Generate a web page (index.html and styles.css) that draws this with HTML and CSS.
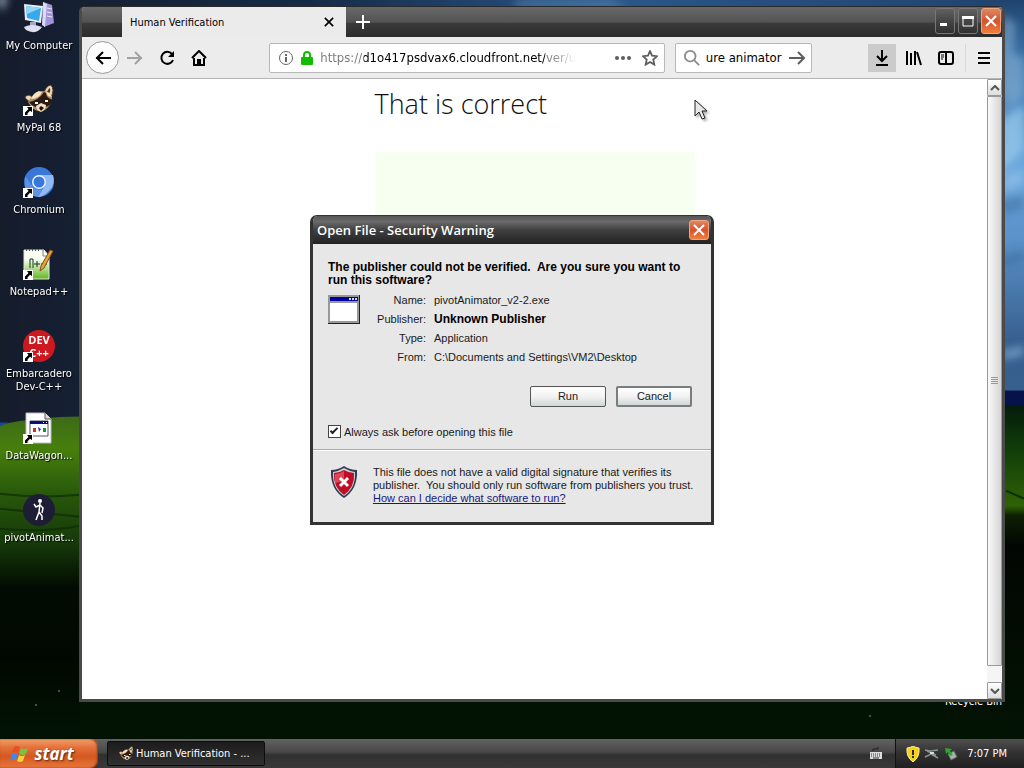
FILE: index.html
```html
<!DOCTYPE html>
<html lang="en">
<head>
  <meta charset="UTF-8" />
  <meta name="viewport" content="width=device-width, initial-scale=1.0"/>
  <title>Human Verification</title>
  <link rel="stylesheet" href="styles.css">
</head>
<body>
  <svg width="0" height="0" class="sprites" aria-hidden="true">
    <symbol id="shortcut" viewBox="0 0 10 10">
      <path d="M0 0h10v10H0z" fill="#fff"/>
      <path d="M4 1h5v5L7 4.800 4.500 7.500V9H2V6.500L5.500 3z" fill="#000"/>
    </symbol>
    <symbol id="raccoon" viewBox="0 0 32 32">
      <path d="M21 8Q24 1 28 1q4 5 0 12z" fill="#ecd6b4" stroke="#4a3322"/>
      <path d="M24 8q2-4 3-4 1 3-1 6z" fill="#4a3322"/>
      <path d="M2 14q0-3 4-3l6 3-3 6z" fill="#ecd6b4" stroke="#4a3322"/>
      <path d="M5 18q4-8 14-11 10 0 10 8-1 8-9 12-9 2-15-9z" fill="#b48e62"/>
      <path d="M6 18q10-2 15-10l2 1q0 5 7 7-2 6-8 7-10 3-16-5z" fill="#2c1b14"/>
      <path d="M8 15q8 0 11-7l-3-1q-6 2-8 8zm15-7q4 0 6 5l-4-1z" fill="#f4e3c4"/>
      <path d="M13 22l5-3 5 2q0 5-5 7-5-2-5-6z" fill="#f1dfbf"/>
      <path d="M16 24l2-2 3 2-3 3z" fill="#1c1310"/>
      <path d="M12 18h3v2h-3zm10-2h3v2h-3z" fill="#fff"/>
    </symbol>
    <symbol id="cross" viewBox="0 0 12 12">
      <path d="M1 1l10 10M11 1L1 11" fill="none" stroke="currentColor" stroke-width="2"/>
    </symbol>
  </svg>

  <main class="desktop">
    <svg class="wallpaper" viewBox="0 0 1024 738" preserveAspectRatio="none" aria-hidden="true">
      <defs>
        <linearGradient id="sky" x1="0" x2="1" y1="0" y2="0">
          <stop offset="0" stop-color="#151c2c"/>
          <stop offset=".3" stop-color="#162b47"/>
          <stop offset=".6" stop-color="#2a568a"/>
          <stop offset="1" stop-color="#20436e"/>
        </linearGradient>
        <linearGradient id="rightSky" x1="0" x2="0" y1="0" y2="1">
          <stop offset="0" stop-color="#20436e"/>
          <stop offset=".15" stop-color="#3f78ad"/>
          <stop offset=".4" stop-color="#69a7dc"/>
          <stop offset=".6" stop-color="#5a91c8"/>
          <stop offset=".85" stop-color="#385f90"/>
          <stop offset="1" stop-color="#36608c"/>
        </linearGradient>
        <linearGradient id="leftHill" x1="0" x2="0" y1="0" y2="1">
          <stop offset="0" stop-color="#3d6a18"/>
          <stop offset=".1" stop-color="#477f0c"/>
          <stop offset=".24" stop-color="#28580b"/>
          <stop offset=".4" stop-color="#15370a"/>
          <stop offset=".53" stop-color="#020c02"/>
          <stop offset=".75" stop-color="#010801"/>
          <stop offset="1" stop-color="#021303"/>
        </linearGradient>
        <linearGradient id="rightHill" x1="0" x2="0" y1="0" y2="1">
          <stop offset="0" stop-color="#041b0d"/>
          <stop offset=".12" stop-color="#0f3b09"/>
          <stop offset=".3" stop-color="#2f6205"/>
          <stop offset=".33" stop-color="#0d2004"/>
          <stop offset=".42" stop-color="#020602"/>
          <stop offset="1" stop-color="#021303"/>
        </linearGradient>
        <filter id="soft"><feGaussianBlur stdDeviation="4"/></filter>
      </defs>
      <rect width="1024" height="738" fill="url(#sky)"/>
      <rect x="990" width="34" height="400" fill="url(#rightSky)"/>
      <g filter="url(#soft)">
        <path d="M1003 15l12 8-2 30 11 6v35l-14 14-10-20z" fill="#86acd0" opacity=".6"/>
        <path d="M1000 120l24-15v45l-24 22z" fill="#9acbed" opacity=".7"/>
        <path d="M1002 175l22-8v18l-22 8zM1002 350l22-5v10l-22 4z" fill="#a2cdf0" opacity=".5"/>
        <path d="M1002 200l22-4v12l-22 6zM1002 256l22-6v10l-22 6z" fill="#315c8b" opacity=".4"/>
        <path d="M520 0h90l20 8H510z" fill="#5d92bd" opacity=".6"/>
        <path d="M-4-4h12L2 12z" fill="#99adc2"/>
      </g>
      <path d="M0 424q40-8 80-8v322H0z" fill="url(#leftHill)"/>
      <path d="M0 422h8l-8 4z" fill="#1646a0"/>
      <path d="M0 493q40 5 80 1M0 528q45 4 80-3M0 508l80 8" fill="none" stroke="#0d2b04" stroke-width="2" opacity=".7"/>
      <path d="M80 600h860v138H80z" fill="#021303"/>
      <path d="M940 390h84v16h-84z" fill="#06124a"/>
      <path d="M940 405h84v333h-84z" fill="url(#rightHill)"/>
      <path d="M1006 490l18 8" stroke="#0d2b04" stroke-width="2"/>
      <path d="M58 689h2v2h-2zM35 703h2v2h-2zM869 714h2v2h-2z" fill="#3d553d"/>
    </svg>

    <ul class="shortcuts">
      <li>
        <svg viewBox="0 0 32 32">
          <path d="M20 0l9 3 2 18-10 4z" fill="#9f95d8"/>
          <path d="M20 0l4 2-2 23-3-2z" fill="#dcd8f8"/>
          <path d="M24 6l5 1M24 10l5 1M24 14l5 1" stroke="#edeafd"/>
          <path d="M1 2l19 2-2 17L2 18z" fill="#e9edf6"/>
          <path d="M3 4l15 2-2 13L4 16z" fill="#38a9eb"/>
          <path d="M3 4l15 2L4 12z" fill="#8ed6f8"/>
          <path d="M7 20h6v4H7z" fill="#a5a8c8"/>
          <path d="M1 25q8-4 18 0-4 6-10 5Q2 29 1 25z" fill="#dcdff0"/>
        </svg>
        <span>My Computer</span>
      </li>
      <li>
        <svg viewBox="0 0 32 32"><use href="#raccoon" width="32" height="32"/><use href="#shortcut" y="22" width="10" height="10"/></svg>
        <span>MyPal 68</span>
      </li>
      <li>
        <svg viewBox="0 0 32 32">
          <circle cx="16" cy="16" r="15" fill="#3a78d8"/>
          <path d="M16 9h14q3 10-5 17-5 5-10 5l7-12z" fill="#91b9f3"/>
          <path d="M2 10l8 11q3 4 9 2l-4 8Q5 30 2 22z" fill="#5d92e5"/>
          <circle cx="16" cy="16" r="7" fill="#e8f1ff"/>
          <circle cx="16" cy="16" r="5.500" fill="#3977dc"/>
          <use href="#shortcut" y="22" width="10" height="10"/>
        </svg>
        <span>Chromium</span>
      </li>
      <li>
        <svg viewBox="0 0 32 32">
          <defs><linearGradient id="note" x1="0" x2="0" y1="0" y2="1"><stop offset=".3" stop-color="#fbfff4"/><stop offset="1" stop-color="#61b91f"/></linearGradient></defs>
          <path d="M1 2h20l5 6v23H1z" fill="url(#note)" stroke="#dfe8d6"/>
          <path d="M20 2v6h6" fill="#fff" stroke="#7c8572"/>
          <path d="M3 2h15" stroke="#525b4d" stroke-width="2" stroke-dasharray="1 2"/>
          <path d="M7 20v-9h3v9M11 16h6M14 13v6M18 16h6M21 13v6" fill="none" stroke="#19331b"/>
          <path d="M17 23l1-5L27 2l3 1-9 17z" fill="#e8a034" stroke="#815020"/>
          <use href="#shortcut" y="22" width="10" height="10"/>
        </svg>
        <span>Notepad++</span>
      </li>
      <li>
        <svg viewBox="0 0 32 32">
          <circle cx="16" cy="16" r="16" fill="#cc181e"/>
          <g class="dev-logo"><text x="16" y="14">DEV</text><text x="16" y="27">C++</text></g>
          <use href="#shortcut" y="22" width="10" height="10"/>
        </svg>
        <span>Embarcadero Dev-C++</span>
      </li>
      <li>
        <svg viewBox="0 0 32 32">
          <path d="M3 1h19l6 6v24H3z" fill="#fff" stroke="#bcbcc3"/>
          <path d="M22 1v6h6" fill="#ddd" stroke="#555"/>
          <path d="M7 9h18v15H7z" fill="#fff" stroke="#556"/>
          <path d="M7 9h18v3H7z" fill="#050f80"/>
          <path d="M20 10h1v1h-1zm3 0h1v1h-1z" fill="#fff"/>
          <path d="M10 16h3v4h-3z" fill="#c3312a"/><path d="M15 15l3 2-2 3z" fill="#193da5"/><path d="M20 16h3v4h-3z" fill="#238653"/>
          <use href="#shortcut" y="22" width="10" height="10"/>
        </svg>
        <span>DataWagon...</span>
      </li>
      <li>
        <svg viewBox="0 0 32 32">
          <circle cx="16" cy="16" r="16" fill="#1d1e36"/>
          <circle cx="17" cy="7" r="2" fill="#fff"/>
          <path d="M17 9l-1 9-3 8M16 18l3 4v4M17 11l-4 2-2-3M17 11l3 3-1 5" fill="none" stroke="#fff" stroke-width="1.500"/>
        </svg>
        <span>pivotAnimat...</span>
      </li>
    </ul>
    <span class="recycle-label">Recycle Bin</span>

    <section class="browser">
      <header class="titlebar">
        <div class="tab">
          <span>Human Verification</span>
          <button class="tab-close" aria-label="Close tab"><svg width="10" height="10"><use href="#cross"/></svg></button>
        </div>
        <button class="new-tab" aria-label="New tab">
          <svg width="14" height="14" viewBox="0 0 14 14"><path d="M7 0v14M0 7h14" stroke="#fff" stroke-width="2"/></svg>
        </button>
        <div class="window-buttons">
          <button aria-label="Minimize"><svg width="12" height="12"><path d="M1 8h7v3H1z" fill="#fff"/></svg></button>
          <button aria-label="Maximize"><svg width="12" height="12"><path d="M1 2h10v9H1z" fill="none" stroke="#fff"/><path d="M0 1h12v3H0z" fill="#fff"/></svg></button>
          <button class="close" aria-label="Close"><svg width="12" height="12"><use href="#cross"/></svg></button>
        </div>
      </header>

      <nav class="toolbar">
        <button class="tool back" aria-label="Back">
          <svg viewBox="0 0 16 16"><path d="M16 8H1M8 2L2 8l6 6" fill="none" stroke="#000" stroke-width="2"/></svg>
        </button>
        <button class="tool" aria-label="Forward">
          <svg viewBox="0 0 16 16"><path d="M0 8h15M8 2l6 6-6 6" fill="none" stroke="#a2a2a2" stroke-width="2"/></svg>
        </button>
        <button class="tool" aria-label="Reload">
          <svg viewBox="0 0 16 16"><path d="M13 4a6 6 0 1 0 1 6" fill="none" stroke="#000" stroke-width="2"/><path d="M15 1v6H9z"/></svg>
        </button>
        <button class="tool" aria-label="Home">
          <svg viewBox="0 0 16 16"><path d="M1 8l7-7 7 7M3 8v7h10V8" fill="none" stroke="#000" stroke-width="2"/><path d="M6 9h4v6H6z"/></svg>
        </button>
        <div class="spacer"></div>
        <div class="field url">
          <svg width="16" height="16" viewBox="0 0 16 16"><circle cx="8" cy="8" r="6.500" fill="none" stroke="#666"/><path d="M7 4h2v2H7zM7 7h2v5H7z" fill="#666"/></svg>
          <svg width="14" height="16" viewBox="0 0 14 16"><path d="M4 7V5a3 3 0 0 1 6 0v2" fill="none" stroke="#12bc00" stroke-width="2"/><rect x="1" y="7" width="12" height="8" rx="1" fill="#12bc00"/></svg>
          <input type="text" aria-label="Address" value="https://d1o417psdvax6.cloudfront.net/ver/us">
          <button class="in-field" aria-label="Page actions"><svg width="18" height="16" viewBox="0 0 18 16" fill="#5e5e5e"><circle cx="3" cy="8" r="2"/><circle cx="9" cy="8" r="2"/><circle cx="15" cy="8" r="2"/></svg></button>
          <button class="in-field" aria-label="Bookmark"><svg width="16" height="16" viewBox="0 0 16 16"><path d="M8 1l2 4.700 5 .5-3.700 3.400 1 5L8 12l-4.300 2.600 1-5L1 6.200l5-.5z" fill="none" stroke="#5e5e5e" stroke-width="1.800"/></svg></button>
        </div>
        <div class="field search">
          <svg width="16" height="16" viewBox="0 0 18 18"><circle cx="7" cy="7" r="6" fill="none" stroke="#8b8b8b" stroke-width="2"/><path d="M11 11l6 6" stroke="#8b8b8b" stroke-width="2"/></svg>
          <input type="text" aria-label="Search" value="ure animator">
          <button class="in-field" aria-label="Go"><svg width="16" height="16" viewBox="0 0 16 16"><path d="M0 8h15M9 2l6 6-6 6" fill="none" stroke="#5e5e5e" stroke-width="2"/></svg></button>
        </div>
        <div class="spacer"></div>
        <button class="tool active" aria-label="Downloads">
          <svg viewBox="0 0 16 16"><path d="M8 0v11M3 6l5 5 5-5M2 15h12" fill="none" stroke="#000" stroke-width="2"/></svg>
        </button>
        <button class="tool" aria-label="Library">
          <svg viewBox="0 0 16 16"><path d="M1 1v14M5 3v12M9 1v14M11 2l4 13" fill="none" stroke="#000" stroke-width="2"/></svg>
        </button>
        <button class="tool" aria-label="Sidebar">
          <svg viewBox="0 0 16 16"><rect x="1" y="2" width="14" height="12" rx="2" fill="none" stroke="#000" stroke-width="2"/><path d="M8 2v12" stroke="#000" stroke-width="2"/><path d="M3 5h3M3 7h3M3 9h2" stroke="#000"/></svg>
        </button>
        <button class="tool menu" aria-label="Menu">
          <svg viewBox="0 0 16 16"><path d="M2 3h12M2 8h12M2 13h12" stroke="#000" stroke-width="2"/></svg>
        </button>
      </nav>

      <div class="viewport">
        <article class="page">
          <h1>That is correct</h1>
          <div class="result"></div>
        </article>
        <div class="scrollbar">
          <button aria-label="Scroll up"><svg width="10" height="6"><path d="M1 5l4-4 4 4" fill="none" stroke="#555" stroke-width="2"/></svg></button>
          <div class="thumb"><svg width="7" height="8" viewBox="0 0 7 8"><path d="M0 0h7v1H0zM0 2h7v1H0zM0 4h7v1H0zM0 6h7v1H0z" fill="#999"/></svg></div>
          <button aria-label="Scroll down"><svg width="10" height="6"><path d="M1 1l4 4 4-4" fill="none" stroke="#555" stroke-width="2"/></svg></button>
        </div>
      </div>
    </section>

    <div class="dialog-layer">
      <section class="dialog" role="dialog" aria-labelledby="dialogTitle">
        <header class="dialog-title">
          <h2 id="dialogTitle">Open File - Security Warning</h2>
          <button aria-label="Close"><svg width="12" height="12"><use href="#cross"/></svg></button>
        </header>
        <div class="dialog-body">
          <p class="question">The publisher could not be verified.&nbsp; Are you sure you want to run this software?</p>
          <div class="file">
            <svg width="32" height="29" viewBox="0 0 32 29">
              <path d="M0 0h32v29H0z" fill="#222"/><path d="M0 0h31v28H0z" fill="#999"/>
              <path d="M2 2h28v4H2z" fill="#0000a0"/><path d="M2 8h27v18H2z" fill="#fff"/>
              <path d="M21 3h2v2h-2zm3 0h2v2h-2zm3 0h2v2h-2z" fill="#ddd"/>
            </svg>
            <dl>
              <dt>Name:</dt><dd>pivotAnimator_v2-2.exe</dd>
              <dt>Publisher:</dt><dd class="publisher">Unknown Publisher</dd>
              <dt>Type:</dt><dd>Application</dd>
              <dt>From:</dt><dd>C:\Documents and Settings\VM2\Desktop</dd>
            </dl>
          </div>
          <div class="actions">
            <button>Run</button>
            <button class="default">Cancel</button>
          </div>
          <label class="ask"><input type="checkbox" checked> Always ask before opening this file</label>
        </div>
        <footer class="dialog-note">
          <svg width="28" height="32" viewBox="0 0 28 32">
            <path d="M14 0q6 4 13 4 1 19-13 28Q0 23 1 4q7 0 13-4z" fill="#333b50"/>
            <path d="M14 2q5 3 11 4 1 16-11 24Q2 22 3 6q6-1 11-4z" fill="#c9ced9"/>
            <path d="M14 4q5 3 10 3 1 14-10 22Q3 21 4 7q5 0 10-3z" fill="#c00c24"/>
            <path d="M5 8q5 0 9-3v10L5 17z" fill="#dc4757"/>
            <path d="M10 12l8 8M18 12l-8 8" stroke="#fff" stroke-width="3"/>
          </svg>
          <p>This file does not have a valid digital signature that verifies its publisher.&nbsp; You should only run software from publishers you trust.<br><a href="#">How can I decide what software to run?</a></p>
        </footer>
      </section>
    </div>

    <svg class="cursor" width="14" height="22" viewBox="0 0 14 22">
      <path d="M1 1v16l4-4 3 7 3-1-3-7h5z" fill="#e8e8e8" stroke="#222"/>
    </svg>
  </main>

  <footer class="taskbar">
    <button class="start">
      <svg width="20" height="18" viewBox="0 0 20 18">
        <path d="M4 2q3-2 6 0L8 8Q5 6 2 8z" fill="#e85024"/>
        <path d="M11 3q3 2 7 0l-2 6q-3 2-7 0z" fill="#7bc043"/>
        <path d="M2 9q3-2 6 0l-2 6q-3-2-6 0z" fill="#4c83e8"/>
        <path d="M9 10q3 2 6 0l-2 6q-3 2-6 0z" fill="#f7cf36"/>
      </svg>
      start
    </button>
    <button class="task">
      <svg width="16" height="16"><use href="#raccoon"/></svg>
      Human Verification - ...
    </button>
    <svg class="keyboard" width="14" height="13" viewBox="0 0 14 13">
      <path d="M4 4V2h5V0" fill="none" stroke="#222"/>
      <path d="M1 5h12v7H1z" fill="#ddd"/>
      <path d="M2 7h10M2 9h10" stroke="#333" stroke-dasharray="1 1"/><path d="M4 11h6" stroke="#333"/>
    </svg>
    <div class="tray">
      <svg width="14" height="16" viewBox="0 0 14 16"><path d="M7 0q3 2 6 2 1 9-6 14Q0 11 1 2q3 0 6-2z" fill="#f6d21f" stroke="#fff09c"/><path d="M6 4h2v5H6zM6 10h2v2H6z" fill="#322a00"/></svg>
      <svg width="16" height="14" viewBox="0 0 16 14"><path d="M1 3l5 1 8-1M1 10l6-3 7 4M3 4l9 4" fill="none" stroke="#8b948d" stroke-width="1.500"/><path d="M6 5h4v2H6z" fill="#d4ddd7"/></svg>
      <svg width="14" height="16" viewBox="0 0 14 16"><path d="M4 8l6-3 3 6-6 3z" fill="#a9b4ae" stroke="#5e6662"/><path d="M1 2l7 1-2 2 3 4-3 1-2-4-2 2z" fill="#2fa52c"/></svg>
      <time>7:07 PM</time>
    </div>
  </footer>
</body>
</html>
```
FILE: styles.css
```css
*, *::before, *::after {
  box-sizing: border-box;
}

body {
  margin: 0;
  height: 100vh;
  min-height: 560px;
  display: flex;
  flex-direction: column;
  overflow: hidden;
  font-family: "DejaVu Sans Condensed", "DejaVu Sans", sans-serif;
  font-size: 11px;
  color: #000;
}

button, input {
  font: inherit;
  color: inherit;
}

button {
  display: flex;
  align-items: center;
  justify-content: center;
  padding: 0;
  border: none;
  background: none;
}

svg {
  display: block;
  flex-shrink: 0;
}

.sprites {
  position: absolute;
}

.desktop {
  position: relative;
  flex: 1;
  overflow: hidden;
}

.wallpaper {
  position: absolute;
  width: 100%;
  height: 100%;
}

/* desktop icons */

.shortcuts {
  position: relative;
  width: 78px;
  margin: 0;
  padding: 2px 0 0;
  list-style: none;
}

.shortcuts li {
  height: 82px;
  display: flex;
  flex-direction: column;
  align-items: center;
  gap: 5px;
  color: #fff;
  line-height: 13px;
  text-align: center;
  text-shadow: 1px 1px 1px #000;
}

.shortcuts svg {
  width: 32px;
  height: 32px;
}

.dev-logo {
  fill: #fff;
  font-family: "Open Sans", sans-serif;
  font-size: 11px;
  font-weight: bold;
  line-height: 11px;
  text-anchor: middle;
  text-shadow: none;
}

.recycle-label {
  position: absolute;
  right: 22px;
  bottom: 31px;
  line-height: 13px;
  color: #fff;
}

/* browser window */

.browser {
  position: absolute;
  inset: 6px 19px 37px 79px;
  display: flex;
  flex-direction: column;
  border: 3px solid #4a4a4a;
  border-top: 1px solid #292929;
  border-radius: 6px 6px 0 0;
  overflow: hidden;
  background: #e9e9e9;
}

.titlebar {
  display: flex;
  height: 30px;
  padding: 0 1px 0 40px;
  background: linear-gradient(#686868, #535353 50%, #3a3a3a 55%, #2c2c2c);
}

.tab {
  width: 224px;
  display: flex;
  align-items: center;
  justify-content: space-between;
  padding: 0 12px 0 8px;
  background: #ebebeb;
}

.new-tab {
  width: 34px;
}

.window-buttons {
  display: flex;
  gap: 3px;
  margin-left: auto;
  padding: 1px 0 3px;
}

.window-buttons button {
  width: 20px;
  border: 1px solid #777;
  border-radius: 3px;
  background: linear-gradient(#606060, #454545 50%, #303030);
}

.window-buttons .close,
.dialog-title button {
  color: #fff;
  border: 1px solid #f2a27c;
  border-radius: 3px;
  background: linear-gradient(#d98a68, #d8522b 50%, #ee8040);
}

.toolbar {
  display: flex;
  align-items: center;
  height: 42px;
  padding: 0 1px 0 4px;
  border-bottom: 1px solid #b5b5b5;
  background: #ececec;
}

.tool {
  width: 32px;
  height: 28px;
}

.tool svg {
  width: 16px;
  height: 16px;
}

.back {
  width: 33px;
  height: 33px;
  border: 1px solid #999;
  border-radius: 50%;
  background: #fcfcfc;
}

.active {
  width: 28px;
  margin: 0 2px;
  background: #cbcbcb;
}

.menu {
  width: 36px;
  margin-left: 3px;
  border-left: 1px solid #d8d8d8;
}

.spacer {
  flex: 1;
}

.field {
  display: flex;
  align-items: center;
  height: 30px;
  border: 1px solid #b8b8b8;
  border-radius: 2px;
  background: #fff;
}

.field input {
  flex: 1;
  min-width: 0;
  padding: 0;
  border: none;
  outline: none;
  background: none;
  font-size: 13px;
}

.url {
  flex: 7;
  gap: 6px;
  padding: 0 6px 0 8px;
}

/* grey scheme and path round a black host, faded at the end */
.field.url input {
  color: transparent;
  background: linear-gradient(to right, #777 44px, #000 44px, #000 225px, #777 225px, #999 238px, #fff 256px);
  background-clip: text;
}

.url .in-field {
  margin-left: 4px;
}

.search {
  width: 137px;
  margin-left: 10px;
  padding: 0 6px 0 8px;
  gap: 6px;
}

.viewport {
  flex: 1;
  display: flex;
  min-height: 0;
  background: #fff;
}

.page {
  flex: 1;
  overflow: hidden;
}

.page h1 {
  max-width: 320px;
  margin: 7px auto 30px;
  font-family: "Open Sans", "Noto Sans", sans-serif;
  font-size: 27px;
  font-weight: 300;
  line-height: 36px;
  color: #111;
}

.result {
  max-width: 320px;
  height: 200px;
  margin: 0 auto;
  background: #f7fff0;
}

.scrollbar {
  width: 15px;
  display: flex;
  flex-direction: column;
  background: #f5f5f5;
}

.scrollbar button {
  height: 17px;
  border: 1px solid #999;
  border-radius: 1px;
  background: linear-gradient(#fff, #ddd);
}

.thumb {
  flex: 1;
  display: flex;
  align-items: center;
  justify-content: center;
  margin-bottom: 16px;
  border: 1px solid #999;
  border-radius: 1px;
  background: linear-gradient(to right, #fafafa, #d5d5d5);
}

/* security dialog */

.dialog-layer {
  position: absolute;
  inset: 0;
  display: grid;
  place-items: center;
}

.dialog {
  width: 404px;
  max-width: 100%;
  border: 3px solid #333;
  border-top-width: 1px;
  border-radius: 7px 7px 0 0;
  overflow: hidden;
  background: #e7e7e7;
  font-family: "Liberation Sans", Arial, sans-serif;
  color: #1a1a1a;
}

.dialog-title {
  display: flex;
  align-items: center;
  justify-content: space-between;
  height: 28px;
  padding: 0 2px 0 4px;
  background: linear-gradient(#555, #6a6a6a 20%, #404040 50%, #222);
}

.dialog-title h2 {
  margin: 0;
  font-family: "Open Sans", sans-serif;
  font-size: 13px;
  font-weight: 600;
  color: #fff;
}

.dialog-title button {
  width: 20px;
  height: 20px;
}

.dialog-body {
  padding: 17px 19px 10px 15px;
}

.question {
  margin: 0 0 8px;
  font-size: 12px;
  font-weight: bold;
  line-height: 13px;
  color: #000;
}

.file {
  display: flex;
}

dl {
  display: grid;
  grid-template-columns: 66px 1fr;
  column-gap: 8px;
  margin: -4px 0 0;
  line-height: 19px;
}

dt {
  text-align: right;
}

dd {
  margin: 0;
}

.publisher {
  font-size: 12px;
  font-weight: bold;
  color: #000;
}

.actions {
  display: flex;
  justify-content: flex-end;
  gap: 10px;
  margin: 19px 0 18px;
}

.actions button {
  width: 76px;
  height: 21px;
  border: 1px solid #555;
  border-radius: 2px;
  background: linear-gradient(#fff, #f2f2f2 50%, #d2d6d6);
}

.actions .default {
  border: 2px solid #7a7d80;
}

.ask {
  display: flex;
  align-items: center;
  gap: 3px;
  height: 14px;
}

.ask input {
  appearance: none;
  width: 13px;
  height: 13px;
  margin: 0;
  border: 1px solid #444;
  background: #fff;
}

.ask input:checked::before {
  content: "";
  display: block;
  width: 8px;
  height: 4px;
  margin: 2px 1px;
  border: solid #222;
  border-width: 0 0 2px 2px;
  transform: rotate(-45deg);
}

.dialog-note {
  display: flex;
  gap: 15px;
  padding: 16px 8px 17px 17px;
  border-top: 1px solid #aaa;
  box-shadow: inset 0 1px #fff;
}

.dialog-note p {
  margin: 0;
  line-height: 13px;
}

.dialog-note a {
  color: #17177c;
}

.cursor {
  position: absolute;
  left: 694px;
  top: 99px;
  filter: drop-shadow(2px 2px 1px rgba(0, 0, 0, 0.3));
}

/* taskbar */

.taskbar {
  display: flex;
  align-items: center;
  height: 29px;
  background: linear-gradient(#626262, #484848 45%, #303030 55%, #393939);
  color: #fff;
}

.start {
  width: 98px;
  height: 29px;
  gap: 4px;
  padding-right: 14px;
  border-radius: 0 8px 8px 0;
  background: linear-gradient(#f3a067, #e3703b 30%, #d4581f 60%, #e8773d);
  box-shadow: inset -1px 0 2px #8e3512;
  font-family: "Open Sans", sans-serif;
  font-size: 17px;
  font-weight: bold;
  font-style: italic;
  text-shadow: 1px 1px 2px #5a250d;
}

.task {
  width: 158px;
  height: 25px;
  justify-content: flex-start;
  gap: 2px;
  margin-left: 9px;
  padding-left: 10px;
  border: 1px solid #0d0d0d;
  border-radius: 2px;
  background: linear-gradient(#1c1c1c, #303030);
}

.keyboard {
  margin: 0 12px 0 auto;
}

.tray {
  height: 29px;
  display: flex;
  align-items: center;
  gap: 4px;
  padding: 0 17px 0 10px;
  border-left: 1px solid #111;
  background: linear-gradient(#505050, #303030 50%, #202020);
}

.tray time {
  margin-left: 5px;
}
```
